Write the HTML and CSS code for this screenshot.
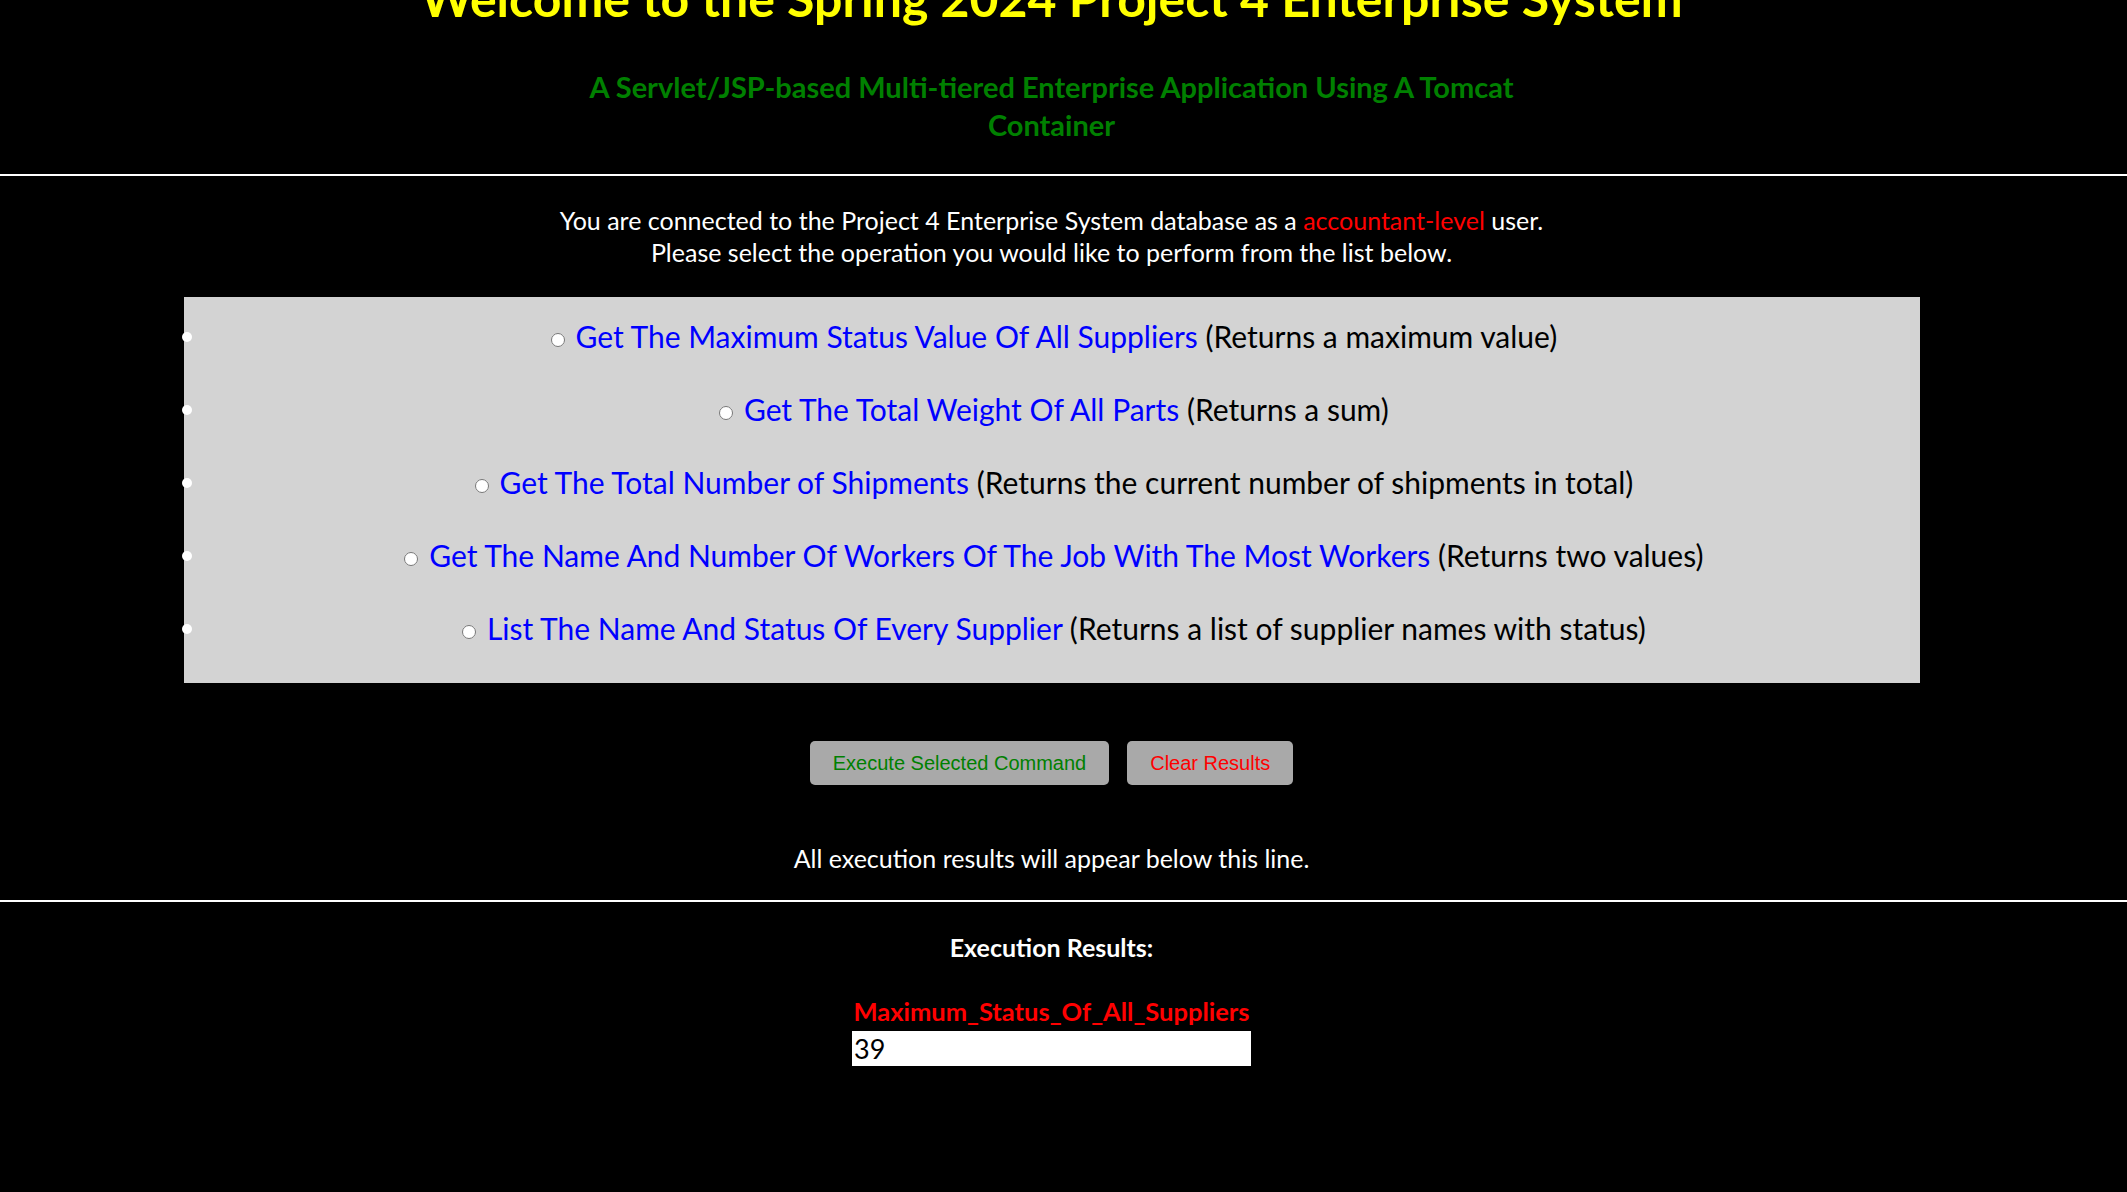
FILE: index.html
```html
<!DOCTYPE html>
<html lang="en">
<head>
<meta charset="utf-8">
<title>Project 4 Enterprise System</title>
<link rel="stylesheet" href="styles.css">
</head>
<body>
<header class="top">
  <h1 class="title">Welcome to the Spring 2024 Project 4 Enterprise System</h1>
  <h2 class="subtitle">A Servlet/JSP-based Multi-tiered Enterprise Application Using A Tomcat<br>Container</h2>
</header>
<hr class="rule rule-top">
<main class="content">
  <p class="intro">You are connected to the Project 4 Enterprise System database as a <span class="role">accountant-level</span> user.<br>Please select the operation you would like to perform from the list below.</p>
  <form class="ops">
    <ul class="op-list">
      <li class="op"><label><input type="radio" name="cmd" value="1"> <span class="op-name">Get The Maximum Status Value Of All Suppliers</span> (Returns a maximum value)</label></li>
      <li class="op"><label><input type="radio" name="cmd" value="2"> <span class="op-name">Get The Total Weight Of All Parts</span> (Returns a sum)</label></li>
      <li class="op"><label><input type="radio" name="cmd" value="3"> <span class="op-name">Get The Total Number of Shipments</span> (Returns the current number of shipments in total)</label></li>
      <li class="op"><label><input type="radio" name="cmd" value="4"> <span class="op-name">Get The Name And Number Of Workers Of The Job With The Most Workers</span> (Returns two values)</label></li>
      <li class="op"><label><input type="radio" name="cmd" value="5"> <span class="op-name">List The Name And Status Of Every Supplier</span> (Returns a list of supplier names with status)</label></li>
    </ul>
    <div class="actions">
      <button type="button" class="btn btn-exec">Execute Selected Command</button>
      <button type="reset" class="btn btn-clear">Clear Results</button>
    </div>
  </form>
  <p class="note">All execution results will appear below this line.</p>
</main>
<hr class="rule rule-bottom">
<section class="results">
  <h3 class="results-title">Execution Results:</h3>
  <div class="result-table">
    <div class="result-head">Maximum_Status_Of_All_Suppliers</div>
    <div class="result-cell">39</div>
  </div>
</section>
</body>
</html>
```
FILE: styles.css
```css
html, body {
  margin: 0;
  padding: 0;
  background: #000;
}
body {
  font-family: Lato, "Open Sans", sans-serif;
  color: #fff;
}
.top, .content, .results {
  padding-right: 24px;
  text-align: center;
}
.title {
  margin: -32px 0 0;
  font-size: 50px;
  line-height: 60px;
  font-weight: 700;
  color: #ffff00;
}
.subtitle {
  margin: 40px 0 0;
  font-size: 29px;
  line-height: 38px;
  font-weight: 700;
  color: #008000;
}
.rule {
  border: 0;
  height: 2px;
  background: #fff;
  margin: 0;
}
.rule-top {
  margin-top: 30px;
}
.intro {
  margin: 28px 0 0;
  font-size: 25px;
  line-height: 32px;
}
.role {
  color: #ff0000;
}
.ops {
  margin: 0;
}
.op-list {
  list-style: none;
  margin: 29px auto 0;
  padding: 3px 0 18px;
  width: 1736px;
  background: #d3d3d3;
  color: #000;
}
.op {
  position: relative;
  height: 73px;
  line-height: 73px;
  font-size: 30px;
}
.op::before {
  content: "";
  position: absolute;
  left: -2px;
  top: 32px;
  width: 10px;
  height: 10px;
  border-radius: 50%;
  background: #fff;
}
.op input {
  margin: 0 3px 0 5px;
  width: 14px;
  height: 14px;
  vertical-align: 1px;
}
.op-name {
  color: #0000ff;
}
.actions {
  display: flex;
  justify-content: center;
  gap: 18px;
  margin-top: 58px;
}
.btn {
  height: 44px;
  padding: 0 23px;
  border: 0;
  border-radius: 5px;
  background: #a9a9a9;
  font-family: "Liberation Sans", Arial, sans-serif;
  font-size: 20px;
}
.btn-exec {
  color: #008000;
}
.btn-clear {
  color: #ff0000;
}
.note {
  margin: 58px 0 0;
  font-size: 25px;
  line-height: 30px;
}
.rule-bottom {
  margin-top: 27px;
}
.results-title {
  margin: 30px 0 0;
  font-size: 25px;
  line-height: 30px;
  font-weight: 700;
}
.result-table {
  width: 399px;
  margin: 34px auto 0;
}
.result-head {
  color: #ff0000;
  font-weight: 700;
  font-size: 25.5px;
  line-height: 30px;
  margin-bottom: 5px;
}
.result-cell {
  background: #fff;
  color: #000;
  height: 35px;
  line-height: 35px;
  text-align: left;
  font-size: 27px;
  padding-left: 2px;
}
```
